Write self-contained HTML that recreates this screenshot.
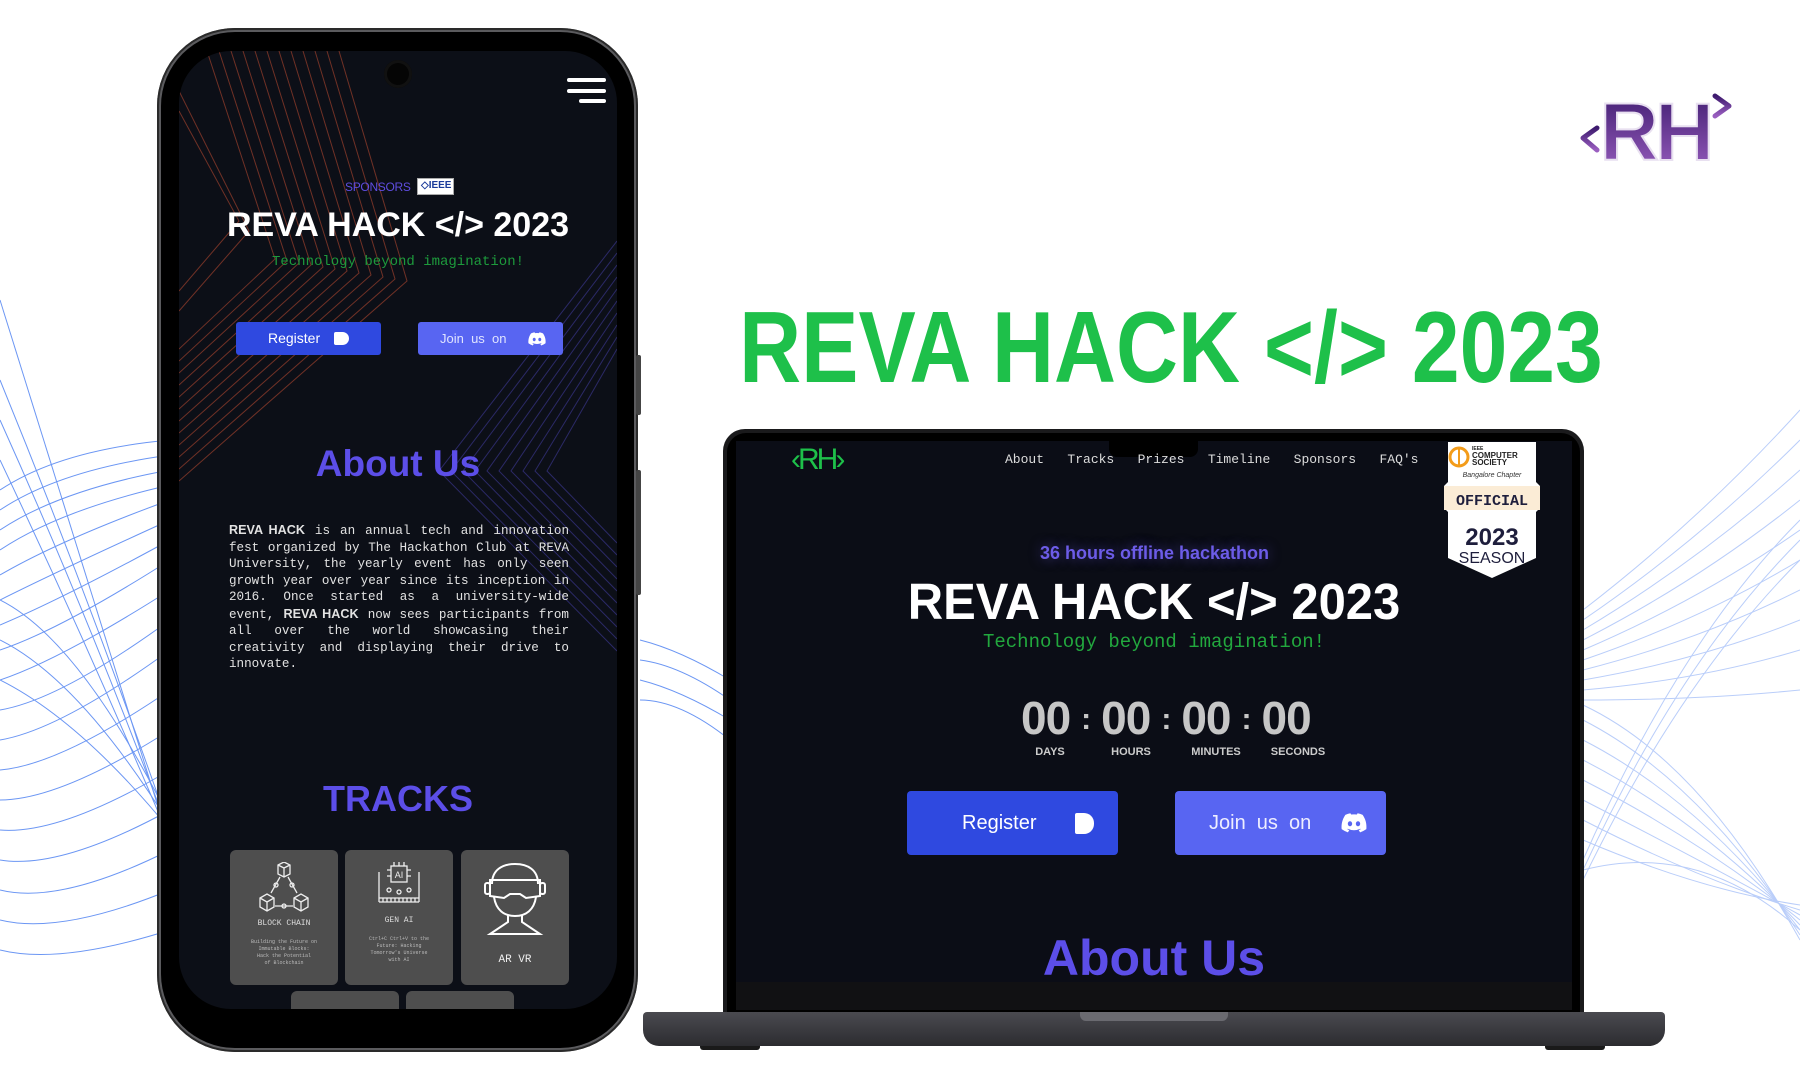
<!DOCTYPE html>
<html><head><meta charset="utf-8"><style>
*{margin:0;padding:0;box-sizing:border-box}
body{width:1800px;height:1080px;background:#fff;position:relative;overflow:hidden;font-family:"Liberation Sans",sans-serif}
.a{position:absolute}
.mono{font-family:"Liberation Mono",monospace}
.c{text-align:center;white-space:nowrap}
</style></head><body>

<svg class="a" style="left:0;top:0" width="1800" height="1080" fill="none">
<g stroke="#3a73f0" stroke-width="1" opacity=".75">
<path d="M0 380 Q90 600 170 830"/><path d="M0 420 Q90 620 170 835"/><path d="M0 460 Q90 650 170 840"/><path d="M0 300 Q80 560 170 845"/>
<path d="M0 490 Q60 450 170 440"/><path d="M0 510 Q60 470 170 455"/><path d="M0 530 Q60 490 170 470"/><path d="M0 550 Q60 510 170 485"/>
<path d="M0 575 Q60 540 170 500"/><path d="M0 600 Q60 570 170 520"/><path d="M0 625 Q60 600 170 540"/><path d="M0 650 Q60 630 170 560"/>
<path d="M0 680 Q60 660 170 590"/><path d="M0 710 Q60 700 170 620"/><path d="M0 740 Q60 730 170 650"/><path d="M0 770 Q60 765 170 690"/>
<path d="M0 800 Q60 800 170 730"/><path d="M0 830 Q60 835 170 770"/><path d="M0 860 Q60 870 170 810"/><path d="M0 890 Q60 905 170 850"/>
<path d="M0 920 Q60 935 170 890"/><path d="M0 950 Q60 965 170 930"/>
<path d="M0 600 Q80 640 170 820"/><path d="M0 640 Q80 680 170 825"/><path d="M0 680 Q80 720 170 830"/>
<path d="M640 640 Q680 650 730 680"/><path d="M640 660 Q680 665 730 700"/><path d="M640 680 Q680 690 730 720"/><path d="M640 700 Q680 700 730 740"/>
</g>
<g stroke="#3a73f0" stroke-width="1" opacity=".35">
<path d="M1583 610 Q1700 520 1800 410"/><path d="M1583 620 Q1700 540 1800 440"/><path d="M1583 630 Q1700 560 1800 470"/><path d="M1583 640 Q1700 580 1800 500"/>
<path d="M1583 650 Q1700 600 1800 530"/><path d="M1583 660 Q1700 620 1800 560"/><path d="M1583 670 Q1700 640 1800 590"/><path d="M1583 680 Q1700 660 1800 620"/>
<path d="M1583 690 Q1700 680 1800 650"/><path d="M1583 700 Q1700 700 1800 690"/><path d="M1583 705 Q1700 760 1800 940"/><path d="M1583 720 Q1700 780 1800 935"/>
<path d="M1583 740 Q1700 800 1800 930"/><path d="M1583 760 Q1700 820 1800 925"/><path d="M1583 780 Q1700 840 1800 920"/><path d="M1583 800 Q1700 860 1800 915"/>
<path d="M1583 870 Q1700 840 1800 930"/><path d="M1583 880 Q1680 680 1800 560"/><path d="M1583 870 Q1680 660 1800 540"/><path d="M1583 860 Q1680 640 1800 520"/>
<path d="M1583 820 Q1700 880 1800 910"/><path d="M1583 840 Q1700 890 1800 905"/>
</g>
</svg>

<div class="a" style="left:1575px;top:88px;width:160px;height:80px">
<svg width="160" height="80" viewBox="0 0 160 80" fill="none">
<defs><linearGradient id="g" x1="0" y1="0" x2="0" y2="1"><stop offset="0" stop-color="#3d1a6e"/><stop offset="1" stop-color="#9a5fc0"/></linearGradient></defs>
<path d="M22 40 L8 50 L22 62" stroke="#fff" stroke-width="9" stroke-linecap="round" stroke-linejoin="round"/>
<path d="M22 40 L8 50 L22 62" stroke="url(#g)" stroke-width="5" stroke-linecap="round" stroke-linejoin="round"/>
<path d="M140 8 L154 18 L140 28" stroke="#fff" stroke-width="9" stroke-linecap="round" stroke-linejoin="round"/>
<path d="M140 8 L154 18 L140 28" stroke="url(#g)" stroke-width="5" stroke-linecap="round" stroke-linejoin="round"/>
<text x="80" y="72" text-anchor="middle" font-family="Liberation Sans" font-weight="bold" font-size="82" fill="url(#g)" stroke="#e8e0f0" stroke-width="2" letter-spacing="-4">RH</text>
</svg></div>

<div class="a" style="left:1171px;top:298px;white-space:nowrap;font-size:101px;font-weight:bold;color:#1ec04a;line-height:100px;transform:translateX(-50%) scaleX(.85)">REVA HACK &lt;/&gt; 2023</div>

<!-- PHONE -->
<div class="a" style="left:157px;top:28px;width:481px;height:1024px;border-radius:78px;background:#5b5b5e;box-shadow:inset 0 0 0 2px #2a2a2a"></div>
<div class="a" style="left:161px;top:32px;width:473px;height:1016px;border-radius:74px;background:#000"></div>
<div class="a" style="left:636px;top:355px;width:5px;height:60px;background:#444;border-radius:2px"></div>
<div class="a" style="left:636px;top:470px;width:5px;height:125px;background:#444;border-radius:2px"></div>
<div class="a" style="left:179px;top:51px;width:438px;height:958px;border-radius:52px;background:#0c0f17;overflow:hidden">
 <svg class="a" style="left:0;top:0" width="438" height="958" fill="none">
  <g stroke="#8a3a2a" stroke-width="1" opacity=".8">
   <path d="M160 0 L228 230 L0 430"/><path d="M148 0 L216 228 L0 418"/><path d="M136 0 L204 226 L0 406"/><path d="M124 0 L192 224 L0 394"/>
   <path d="M112 0 L180 222 L0 382"/><path d="M100 0 L168 220 L0 370"/><path d="M88 0 L156 218 L0 358"/><path d="M76 0 L144 216 L0 346"/>
   <path d="M64 0 L132 214 L0 334"/><path d="M52 0 L120 212 L0 322"/><path d="M40 0 L108 210 L0 310"/><path d="M28 0 L96 208 L0 298"/>
   <path d="M0 40 L70 180 L0 260"/><path d="M0 60 L60 170 L0 240"/>
  </g>
  <g stroke="#33307a" stroke-width="1" opacity=".8">
   <path d="M438 190 L260 420 L438 600"/><path d="M438 202 L272 420 L438 588"/><path d="M438 214 L284 420 L438 576"/><path d="M438 226 L296 420 L438 564"/>
   <path d="M438 238 L308 420 L438 552"/><path d="M438 250 L320 420 L438 540"/><path d="M438 262 L332 420 L438 528"/><path d="M438 274 L344 420 L438 516"/>
   <path d="M438 286 L356 420 L438 504"/><path d="M438 298 L368 420 L438 492"/>
  </g>
 </svg>
 <div class="a" style="left:205px;top:9px;width:28px;height:28px;border-radius:50%;background:#050505;box-shadow:inset 0 0 0 3px #111"></div>
 <div class="a" style="left:388px;top:27px;width:39px;height:4px;border-radius:2px;background:#fff"></div>
 <div class="a" style="left:388px;top:38px;width:39px;height:4px;border-radius:2px;background:#fff"></div>
 <div class="a" style="left:400px;top:48px;width:27px;height:4px;border-radius:2px;background:#fff"></div>
 <div class="a" style="left:166px;top:129px;font-size:12px;color:#5f4de0;letter-spacing:-.3px">SPONSORS</div>
 <div class="a" style="left:238px;top:127px;width:37px;height:17px;background:#fff;border:1px solid #aaa;color:#1a3a9a;font-size:10px;font-weight:bold;line-height:14px;padding-left:3px;white-space:nowrap">◇IEEE</div>
 <div class="a c" style="left:0;top:155px;width:438px;font-size:34px;font-weight:bold;color:#fff">REVA HACK &lt;/&gt; 2023</div>
 <div class="a c mono" style="left:0;top:203px;width:438px;font-size:14px;color:#1d9a3c">Technology beyond imagination!</div>
 <div class="a" style="left:57px;top:271px;width:145px;height:33px;background:#2f49e0;border-radius:3px;color:#fff;font-size:14px;line-height:33px;padding-left:32px">Register<span class="a" style="left:98px;top:10px;width:15px;height:13px;background:#fff;border-radius:2px 7px 7px 2px"></span></div>
 <div class="a" style="left:239px;top:271px;width:145px;height:33px;background:#5865f2;border-radius:3px;color:#e0e4ff;font-size:13px;line-height:33px;padding-left:22px;white-space:nowrap">Join&nbsp; us&nbsp; on
  <svg class="a" style="left:110px;top:10px" width="18" height="14" viewBox="0 0 24 18"><path fill="#fff" d="M20 1.5A19 19 0 0 0 15.3 0l-.6 1.2a17 17 0 0 0-5.4 0L8.7 0A19 19 0 0 0 4 1.5C1 6 .2 10.4.6 14.7A19 19 0 0 0 6.4 17.6l1.2-2a12 12 0 0 1-1.9-.9l.5-.4a13.6 13.6 0 0 0 11.6 0l.5.4-1.9.9 1.2 2a19 19 0 0 0 5.8-2.900C23.9 9.700 22.600 5.300 20 1.500zM8.3 12c-1.1 0-2-1-2-2.3s.9-2.3 2-2.3 2 1 2 2.3-.9 2.3-2 2.3zm7.4 0c-1.1 0-2-1-2-2.3s.9-2.3 2-2.3 2 1 2 2.3-.9 2.3-2 2.3z"/></svg></div>
 <div class="a c" style="left:0;top:392px;width:438px;font-size:37px;color:#5c4ee8;font-weight:bold">About Us</div>
 <div class="a mono" style="left:50px;top:471px;width:340px;font-size:12.6px;line-height:16.5px;color:#e2e2e2;text-align:justify"><b style="font-family:'Liberation Sans'">REVA HACK</b> is an annual tech and innovation fest organized by The Hackathon Club at REVA University, the yearly event has only seen growth year over year since its inception in 2016. Once started as a university-wide event, <b style="font-family:'Liberation Sans'">REVA HACK</b> now sees participants from all over the world showcasing their creativity and displaying their drive to innovate.</div>
 <div class="a c" style="left:0;top:727px;width:438px;font-size:36px;font-weight:bold;color:#5c4ee8">TRACKS</div>
 <div class="a" style="left:51px;top:799px;width:108px;height:135px;background:#4e4e4e;border-radius:6px">
  <svg class="a" style="left:28px;top:12px" width="52" height="50" viewBox="0 0 52 50" fill="none" stroke="#eee" stroke-width="1.3"><path d="M20 3 L26 0 L32 3 L32 12 L26 15 L20 12Z M20 3 L26 6 L32 3 M26 6 V15"/><path d="M2 36 L9 32 L16 36 L16 45 L9 49 L2 45Z M2 36 L9 40 L16 36 M9 40 V49"/><path d="M36 36 L43 32 L50 36 L50 45 L43 49 L36 45Z M36 36 L43 40 L50 36 M43 40V49"/><path d="M22 15 L13 31 M30 15 L39 31 M17 44 H35"/><circle cx="18" cy="23" r="2"/><circle cx="34" cy="23" r="2"/><circle cx="26" cy="44" r="2"/></svg>
  <div class="a c mono" style="left:0;top:69px;width:108px;font-size:8px;color:#ddd">BLOCK CHAIN</div>
  <div class="a c mono" style="left:0;top:89px;width:108px;font-size:5px;line-height:7px;color:#bbb">Building the Future on<br>Immutable Blocks:<br>Hack the Potential<br>of Blockchain</div>
 </div>
 <div class="a" style="left:166px;top:799px;width:108px;height:135px;background:#4e4e4e;border-radius:6px">
  <svg class="a" style="left:32px;top:12px" width="44" height="42" viewBox="0 0 44 42" fill="none" stroke="#eee" stroke-width="1.3"><rect x="14" y="4" width="16" height="16"/><path d="M17 0v4M22 0v4M27 0v4M10 8h4M10 14h4M30 8h4M30 14h4M2 10v30M42 10v30M2 40h40M2 36h40M6 36v4M10 36v4M14 36v4M18 36v4M22 36v4M26 36v4M30 36v4M34 36v4M38 36v4"/><text x="22" y="16" font-size="9" fill="#eee" stroke="none" text-anchor="middle" font-family="Liberation Sans">AI</text><circle cx="12" cy="28" r="2"/><circle cx="22" cy="30" r="2"/><circle cx="32" cy="28" r="2"/></svg>
  <div class="a c mono" style="left:0;top:66px;width:108px;font-size:8px;color:#ddd">GEN AI</div>
  <div class="a c mono" style="left:0;top:86px;width:108px;font-size:5px;line-height:7px;color:#bbb">Ctrl+C Ctrl+V to the<br>Future: Hacking<br>Tomorrow's Universe<br>with AI</div>
 </div>
 <div class="a" style="left:282px;top:799px;width:108px;height:135px;background:#4e4e4e;border-radius:6px">
  <svg class="a" style="left:23px;top:12px" width="62" height="75" viewBox="0 0 62 75" fill="none" stroke="#fff" stroke-width="2"><path d="M8 22 C8 8 18 2 31 2 C44 2 54 8 54 22"/><path d="M6 18 H56 V34 L42 36 L36 32 H26 L20 36 L6 34Z"/><rect x="1" y="21" width="5" height="11" rx="2"/><rect x="56" y="21" width="5" height="11" rx="2"/><path d="M10 35 C12 48 20 54 31 54 C42 54 50 48 52 35"/><path d="M24 53 L24 60 L6 72 H56 L38 60 L38 53"/></svg>
  <div class="a c mono" style="left:0;top:104px;width:108px;font-size:11px;color:#eee">AR VR</div>
 </div>
 <div class="a" style="left:112px;top:940px;width:108px;height:40px;background:#4e4e4e;border-radius:6px"></div>
 <div class="a" style="left:227px;top:940px;width:108px;height:40px;background:#4e4e4e;border-radius:6px"></div>
</div>

<!-- LAPTOP -->
<div class="a" style="left:723px;top:429px;width:861px;height:585px;border-radius:22px 22px 0 0;background:#1a1a1c"></div>
<div class="a" style="left:727px;top:433px;width:853px;height:581px;border-radius:19px 19px 0 0;background:#000"></div>
<div class="a" style="left:736px;top:441px;width:836px;height:541px;background:#0b0d16;overflow:hidden">
 <div class="a" style="left:373px;top:0;width:89px;height:16px;background:#000;border-radius:0 0 8px 8px"></div>
 <div class="a" style="left:55px;top:2px;font-size:30px;color:#1ec04a;font-family:'Liberation Sans';letter-spacing:-3px">‹RH›</div>
 <div class="a mono" style="left:269px;top:11px;font-size:13px;color:#ddd;white-space:nowrap">About&nbsp;&nbsp; Tracks&nbsp;&nbsp; Prizes&nbsp;&nbsp; Timeline&nbsp;&nbsp; Sponsors&nbsp;&nbsp; FAQ's</div>
 <svg class="a" style="left:708px;top:1px" width="96" height="136" viewBox="0 0 96 136">
  <path d="M4 0 H92 V40 L96 44 V66 L92 70 V116 L48 136 L4 116 V70 L0 66 V44 L4 40Z" fill="#fff"/>
  <rect x="0" y="44" width="96" height="24" fill="#fbecd6"/>
  <circle cx="15" cy="15" r="9" fill="none" stroke="#f39c1a" stroke-width="3"/><path d="M15 5v20" stroke="#f39c1a" stroke-width="2"/>
  <text x="28" y="8" font-size="5" font-weight="bold" fill="#222" font-family="Liberation Sans">IEEE</text>
  <text x="28" y="16" font-size="8" font-weight="bold" fill="#222" font-family="Liberation Sans">COMPUTER</text>
  <text x="28" y="23" font-size="8" font-weight="bold" fill="#222" font-family="Liberation Sans">SOCIETY</text>
  <text x="48" y="35" font-size="7" font-style="italic" fill="#333" text-anchor="middle" font-family="Liberation Sans">Bangalore Chapter</text>
  <text x="48" y="63" font-size="15" font-weight="bold" fill="#1e1e3c" text-anchor="middle" font-family="Liberation Mono">OFFICIAL</text>
  <text x="48" y="103" font-size="24" font-weight="bold" fill="#1e1e3c" text-anchor="middle" font-family="Liberation Sans">2023</text>
  <text x="48" y="121" font-size="16" fill="#1e1e3c" text-anchor="middle" font-family="Liberation Sans">SEASON</text>
 </svg>
 <div class="a c" style="top:102px;left:266px;width:305px;font-size:18px;font-weight:bold;color:#6c5ce7;text-shadow:0 0 12px rgba(108,92,231,.5)">36 hours offline hackathon</div>
 <div class="a" style="left:418px;top:133px;font-size:51px;font-weight:bold;color:#fff;line-height:56px;white-space:nowrap;transform:translateX(-50%) scaleX(.96)">REVA HACK &lt;/&gt; 2023</div>
 <div class="a c mono" style="left:18px;top:190px;width:800px;font-size:19px;color:#22a83e">Technology beyond imagination!</div>
 <div class="a" style="left:285px;top:252px;font-size:46px;font-weight:bold;color:#c6c6c6;white-space:nowrap;line-height:50px;letter-spacing:-1px">00<span style="margin:0 11px;font-size:30px;vertical-align:5px">:</span>00<span style="margin:0 11px;font-size:30px;vertical-align:5px">:</span>00<span style="margin:0 11px;font-size:30px;vertical-align:5px">:</span>00</div>
 <div class="a c" style="left:294px;top:305px;width:40px;font-size:11px;font-weight:bold;color:#ccc">DAYS</div>
 <div class="a c" style="left:375px;top:305px;width:40px;font-size:11px;font-weight:bold;color:#ccc">HOURS</div>
 <div class="a c" style="left:450px;top:305px;width:60px;font-size:11px;font-weight:bold;color:#ccc">MINUTES</div>
 <div class="a c" style="left:532px;top:305px;width:60px;font-size:11px;font-weight:bold;color:#ccc">SECONDS</div>
 <div class="a" style="left:171px;top:350px;width:211px;height:64px;background:#2f49e0;border-radius:4px;color:#fff;font-size:20px;line-height:64px;padding-left:55px">Register<span class="a" style="left:168px;top:22px;width:19px;height:21px;background:#fff;border-radius:2px 10px 10px 2px"></span></div>
 <div class="a" style="left:439px;top:350px;width:211px;height:64px;background:#5865f2;border-radius:4px;color:#eef;font-size:20px;line-height:64px;padding-left:34px;white-space:nowrap">Join&nbsp; us&nbsp; on
  <svg class="a" style="left:166px;top:22px" width="26" height="20" viewBox="0 0 24 18"><path fill="#fff" d="M20 1.5A19 19 0 0 0 15.3 0l-.6 1.2a17 17 0 0 0-5.4 0L8.7 0A19 19 0 0 0 4 1.5C1 6 .2 10.4.6 14.7A19 19 0 0 0 6.4 17.6l1.2-2a12 12 0 0 1-1.9-.9l.5-.4a13.6 13.6 0 0 0 11.6 0l.5.4-1.9.9 1.2 2a19 19 0 0 0 5.8-2.9C23.9 9.7 22.6 5.3 20 1.5zM8.3 12c-1.1 0-2-1-2-2.3s.9-2.3 2-2.3 2 1 2 2.3-.9 2.3-2 2.3zm7.4 0c-1.1 0-2-1-2-2.3s.9-2.3 2-2.3 2 1 2 2.3-.9 2.3-2 2.3z"/></svg></div>
 <div class="a c" style="left:18px;top:488px;width:800px;font-size:50px;color:#5c4ee8;font-weight:bold">About Us</div>
</div>
<div class="a" style="left:736px;top:982px;width:836px;height:28px;background:#111113"></div>
<div class="a" style="left:643px;top:1012px;width:1022px;height:34px;background:linear-gradient(#4a4a50,#2c2c30);border-radius:4px 4px 16px 16px"></div>
<div class="a" style="left:1080px;top:1012px;width:148px;height:9px;background:#6a6a70;border-radius:0 0 6px 6px"></div>
<div class="a" style="left:700px;top:1046px;width:60px;height:4px;background:#1a1a1a;border-radius:0 0 3px 3px"></div>
<div class="a" style="left:1545px;top:1046px;width:60px;height:4px;background:#1a1a1a;border-radius:0 0 3px 3px"></div>
</body></html>
